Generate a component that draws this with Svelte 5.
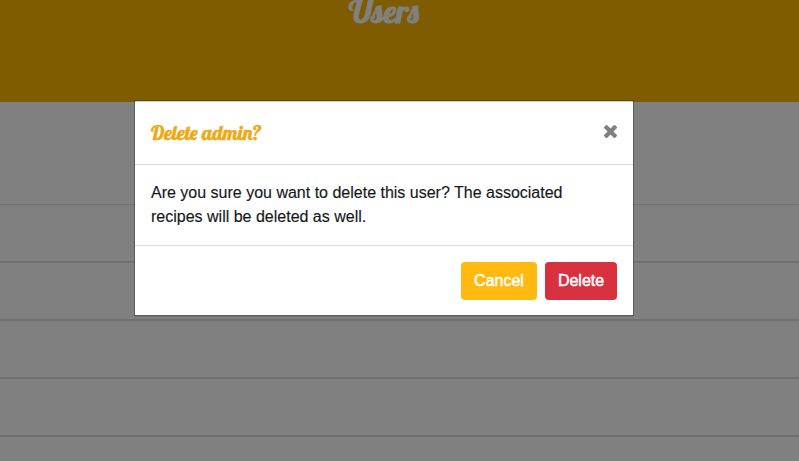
<script>
  const rows = [1, 2, 3, 4, 5];
</script>

<div class="page">
  <header class="banner">
    <h1>Users</h1>
  </header>
  <main>
    <div class="intro"></div>
    {#each rows as row (row)}
      <div class="row"></div>
    {/each}
  </main>

  <div class="overlay">
    <div class="dialog" role="dialog" aria-modal="true">
      <div class="head">
        <h5>Delete admin?</h5>
        <button class="close" aria-label="Close">
          <svg width="13" height="13" viewBox="302 366 1188 1188">
            <path d="M1490 1322q0 40-28 68l-136 136q-28 28-68 28t-68-28l-294-294-294 294q-28 28-68 28t-68-28l-136-136q-28-28-28-68t28-68l294-294-294-294q-28-28-28-68t28-68l136-136q28-28 68-28t68 28l294 294 294-294q28-28 68-28t68 28l136 136q28 28 28 68t-28 68l-294 294 294 294q28 28 28 68z" />
          </svg>
        </button>
      </div>
      <div class="body">Are you sure you want to delete this user? The associated recipes will be deleted as well.</div>
      <div class="foot">
        <button class="btn cancel">Cancel</button>
        <button class="btn delete">Delete</button>
      </div>
    </div>
  </div>
</div>

<style>
  :global(body) { margin: 0; }
  .page {
    position: relative;
    width: 799px;
    height: 461px;
    overflow: hidden;
    background: #808080;
    font: 16px/24px "Liberation Sans", Arial, sans-serif;
  }
  .banner {
    height: 102px;
    background: #805c00;
  }
  h1, h5 {
    margin: 0;
    font-family: Lobster, "Liberation Serif", cursive;
    font-weight: 400;
    white-space: nowrap;
  }
  h1 {
    padding-left: 349px;
    font-size: 32px;
    line-height: 22px;
    color: #808080;
    -webkit-text-stroke: 1px #808080;
  }
  h5 {
    font-size: 20px;
    line-height: 31px;
    color: #efa912;
    -webkit-text-stroke: 0.5px #efa912;
  }
  .intro { height: 102px; border-bottom: 1px solid #707070; }
  .row { box-sizing: border-box; height: 58px; border-bottom: 2px solid #707070; }
  .overlay {
    position: absolute;
    inset: 0;
    padding-top: 100px;
    padding-left: 134px;
  }
  .dialog {
    box-sizing: border-box;
    width: 500px;
    height: 216px;
    border: 1px solid rgba(0, 0, 0, 0.2);
    background: #fff;
    background-clip: padding-box;
    box-shadow: inset 0 1px #d0cdc6, 0 1px rgba(0, 0, 0, 0.1);
  }
  .head {
    box-sizing: border-box;
    height: 64px;
    display: flex;
    justify-content: space-between;
    padding: 16px;
    border-bottom: 1px solid #d9dde0;
  }
  .close {
    display: block;
    width: 13px;
    height: 13px;
    margin-top: 8px;
    padding: 0;
    border: 0;
    background: none;
  }
  .close svg { display: block; }
  .close path { fill: #808080; }
  .body {
    box-sizing: border-box;
    height: 81px;
    padding: 16px;
    border-bottom: 1px solid #dbdbdb;
    color: #15181b;
    -webkit-text-stroke: 0.15px #15181b;
  }
  .foot {
    display: flex;
    justify-content: flex-end;
    gap: 8px;
    padding: 16px;
  }
  .btn {
    box-sizing: border-box;
    height: 38px;
    padding: 0;
    border: 0;
    border-radius: 4px;
    color: #fff;
    font: 16px/38px "Liberation Sans", Arial, sans-serif;
    -webkit-text-stroke: 0.5px #fff;
  }
  .cancel { width: 76px; background: #ffb90f; }
  .delete { width: 72px; background: #d7303e; }
</style>
